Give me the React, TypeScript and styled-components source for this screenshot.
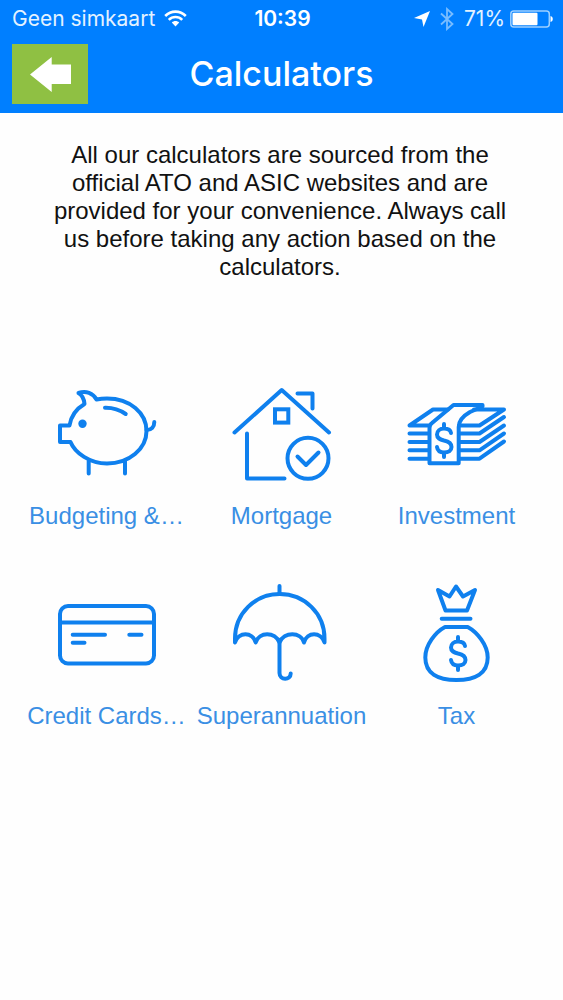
import React from "react";
import styled, { createGlobalStyle } from "styled-components";

const GlobalStyle = createGlobalStyle`
  * { box-sizing: border-box; }
  body {
    margin: 0;
    background: #fefefe;
    font-family: "Liberation Sans", Arial, sans-serif;
  }
`;

const Page = styled.div`
  min-height: 100vh;
`;

const Header = styled.header`
  background: #007fff;
  color: #fff;
`;

const StatusBar = styled.div`
  display: grid;
  grid-template-columns: 1fr auto 1fr;
  align-items: center;
  height: 37px;
  padding: 0 10px 0 12px;
  font-family: Inter, sans-serif;
  font-size: 21px;
  line-height: 24px;
`;

const StatusGroup = styled.div<{ $end?: boolean }>`
  display: flex;
  align-items: center;
  justify-content: ${(p) => (p.$end ? "flex-end" : "flex-start")};
  gap: ${(p) => (p.$end ? "5px" : "9px")};
  color: #e3f2ff;
  white-space: nowrap;
`;

const Clock = styled.time`
  font-weight: 600;
`;

const NavBar = styled.div`
  display: grid;
  grid-template-columns: 1fr auto 1fr;
  align-items: center;
  padding: 7px 12px 9px;
`;

const BackButton = styled.button`
  display: flex;
  align-items: center;
  justify-content: center;
  width: 76px;
  height: 60px;
  padding: 0;
  border: 0;
  background: #8fc043;
  cursor: pointer;
`;

const Title = styled.h1`
  margin: 0;
  font-family: Inter, sans-serif;
  font-size: 34px;
  line-height: 40px;
  font-weight: 500;
`;

const Intro = styled.p`
  margin: 0;
  padding: 28px 48px 0 45px;
  color: #111;
  font-size: 24px;
  line-height: 28px;
  text-align: center;
`;

const Grid = styled.nav`
  display: grid;
  grid-template-columns: repeat(3, 1fr);
  row-gap: 56px;
  padding: 105px 19px 56px;
`;

const Tile = styled.a`
  display: flex;
  flex-direction: column;
  align-items: center;
  gap: 16px;
  color: #3a8fe4;
  font-size: 24px;
  line-height: 28px;
  text-decoration: none;
  white-space: nowrap;
`;

const Glyph = styled.svg`
  display: block;
  width: 101px;
  height: 100px;
  overflow: visible;
  fill: none;
  stroke: #0f80ee;
  stroke-width: 4;
  stroke-linecap: round;
  stroke-linejoin: round;
`;

const DOLLAR =
  "M7 9C6.500 6 4 4.500 0 4.500C-4 4.500 -7 7 -7 10.500C-7 14.500 -4 15.500 0 16.500C4.500 17.500 7.500 19 7.500 23C7.500 26.500 4.500 28.500 0 28.500C-4 28.500 -6.500 26.500 -7 23M0 0V4.500M0 28.500V33";

const calculators = [
  {
    label: "Budgeting &…",
    art: (
      <>
        <path d="M13.500 39.500H4V56H14.500C19 67 34 77.500 51 77.500C73 77.500 90.500 63 90.500 45C90.500 27 74 12.500 51 12.500C47 12.500 44 12.800 40.500 13.500C37 7 30 4.500 22.500 7C26 9 28 12 28.500 18C20 23 15 30 13.500 39.500Z" />
        <path d="M32.700 75V87.500M69 75V87.500M49 21.700C57 21.500 64 24 69.700 28M90.500 44C95.500 44 98.300 41 98.300 36" />
        <circle cx="26.500" cy="37.700" r="4.200" fill="#0f80ee" stroke="none" />
      </>
    ),
  },
  {
    label: "Mortgage",
    art: (
      <>
        <path d="M3.500 46.500L50.700 4L98 46.500M66.500 7.500H81.500V22.500M16 47.500V92.500H53.500" />
        <rect x="44" y="23.300" width="13.300" height="13.300" strokeLinejoin="miter" />
        <circle cx="77" cy="72.300" r="20.500" />
        <path d="M66.500 70.500L75 79L87.500 66.500" />
      </>
    ),
  },
  {
    label: "Investment",
    art: (
      <>
        <path d="M23.500 39.500H3.500L27 23.500H42M3.500 47.500H23M3.500 56H23M3.500 64.300H23M3.500 72.700H23" />
        <path d="M23.500 77.300V42C23.500 39.500 24 38.500 26 37L47.500 19H76.500V20.500L64 26C57 30 52.700 35 52.700 41V77.300Z" />
        <path d="M68 23.500H98L73.500 39.500H53M98 31L73.500 47.500H53M98 39.500L73.500 56H53M98 47.500L73.500 64.300H53M98 55.500L73.500 72.700H53" />
        <path d={DOLLAR} transform="translate(38 38)" />
      </>
    ),
  },
  {
    label: "Credit Cards…",
    art: (
      <>
        <rect x="4" y="20" width="94" height="57.500" rx="8" />
        <path d="M4 36.500H98M16.700 48.700H49M73.300 48.700H85.500M16.700 56.700H28.500" />
      </>
    ),
  },
  {
    label: "Superannuation",
    art: (
      <>
        <path d="M48.500 0V7.500" />
        <path d="M4 56.500V52.500C4 27.500 24 8 48.700 8C73.500 8 93.500 27.500 93.500 52.500V56.500C90 45.500 76 45.500 73 56.500C70 45.500 53 45.500 48.500 56.500C44 45.500 28 45.500 24.700 56.500C21.500 45.500 7.500 45.500 4 56.500Z" />
        <path d="M48.500 56.500V87C48.500 94.500 59.700 94.500 59.700 87.500" />
      </>
    ),
  },
  {
    label: "Tax",
    art: (
      <>
        <path d="M39.500 24.500L32 4L43.500 10.500L50 0.500L57 10.500L69 4L61 24.500ZM35.700 32.700H64.500" />
        <path d="M39 41H61.700C71 46 81.700 59 81.700 71.500C81.700 87.500 69 94 50.500 94C32 94 19.300 87.500 19.300 71.500C19.300 59 29.500 46 39 41Z" />
        <path d={DOLLAR} transform="translate(52 51)" />
      </>
    ),
  },
];

export default function App() {
  return (
    <Page>
      <GlobalStyle />
      <Header>
        <StatusBar>
          <StatusGroup>
            <span>Geen simkaart</span>
            <svg width="23" height="17" viewBox="0 0 23 17" fill="none" stroke="#fff" strokeWidth="2.600" aria-hidden="true">
              <path d="M1.200 6C7 0.200 16 0.200 21.800 6M4.800 9.800C8.600 6 14.400 6 18.200 9.800" />
              <path d="M11.500 16.500L7.800 12.600C10 10.600 13 10.600 15.200 12.600Z" fill="#fff" stroke="none" />
            </svg>
          </StatusGroup>
          <Clock>10:39</Clock>
          <StatusGroup $end>
            <svg width="16" height="16" viewBox="0 0 16 16" fill="#fff" aria-hidden="true">
              <path d="M16 0L9.500 16L8 8.500L0 7Z" />
            </svg>
            <svg width="24" height="24" viewBox="0 0 24 24" fill="none" stroke="#79bdff" strokeWidth="1.800" aria-hidden="true">
              <path d="M6 6.500L17.500 17L12 22V2L17.500 7L6 17.500" />
            </svg>
            <span>71%</span>
            <svg width="43" height="18" viewBox="0 0 43 18" aria-hidden="true">
              <rect x="0.800" y="1" width="38.500" height="16" rx="3" fill="none" stroke="#9dd0ff" strokeWidth="1.500" />
              <rect x="2.500" y="2.800" width="25" height="12.400" rx="1" fill="#fff" />
              <path d="M40.500 6C43.500 6.500 43.500 11.500 40.500 12Z" fill="#fff" />
            </svg>
          </StatusGroup>
        </StatusBar>
        <NavBar>
          <BackButton type="button" aria-label="Back">
            <svg width="41" height="35" viewBox="0 0 41 35" fill="#fff" aria-hidden="true">
              <path d="M0 17.500L21.700 0V7.500H41V27H21.700V35Z" />
            </svg>
          </BackButton>
          <Title>Calculators</Title>
        </NavBar>
      </Header>
      <main>
        <Intro>
          All our calculators are sourced from the official ATO and ASIC websites and are provided
          for your convenience. Always call us before taking any action based on the calculators.
        </Intro>
        <Grid aria-label="Calculators">
          {calculators.map((c) => (
            <Tile key={c.label} href="#">
              <Glyph viewBox="0 0 101 100" aria-hidden="true">
                {c.art}
              </Glyph>
              <span>{c.label}</span>
            </Tile>
          ))}
        </Grid>
      </main>
    </Page>
  );
}
